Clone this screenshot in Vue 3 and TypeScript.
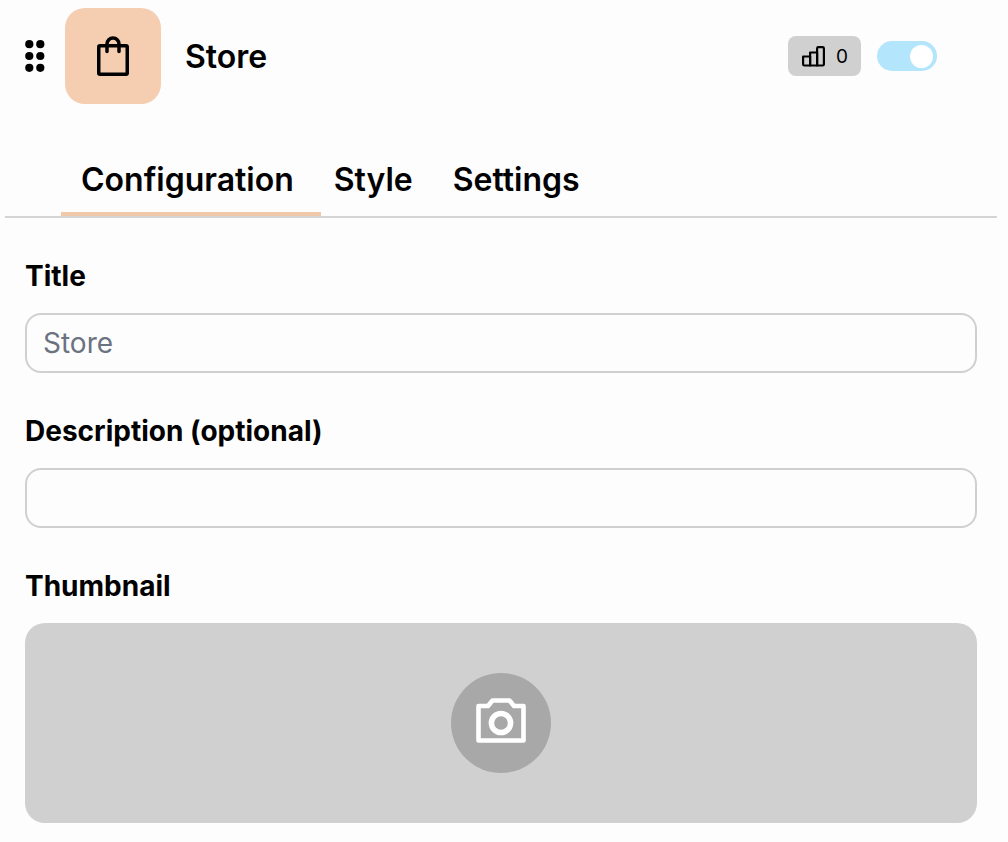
<script setup lang="ts">
const tabs: string[] = ['Configuration', 'Style', 'Settings']
</script>

<template>
  <div class="panel">
    <header class="head">
      <svg class="dots" width="20" height="32" viewBox="0 0 20 32" fill="#000">
        <circle cx="4.300" cy="4.200" r="4.100" /><circle cx="15.300" cy="4.200" r="4.100" />
        <circle cx="4.300" cy="16" r="4.100" /><circle cx="15.300" cy="16" r="4.100" />
        <circle cx="4.300" cy="27.800" r="4.100" /><circle cx="15.300" cy="27.800" r="4.100" />
      </svg>
      <div class="app-icon">
        <svg width="32" height="40" viewBox="0 0 32 40" fill="none" stroke="#000" stroke-width="3.500" stroke-linecap="round" stroke-linejoin="round">
          <path d="M3 9.750h26a1.250 1.250 0 0 1 1.250 1.250v26a1.250 1.250 0 0 1-1.250 1.250H3A1.250 1.250 0 0 1 1.750 37V11A1.250 1.250 0 0 1 3 9.750z" />
          <path d="M10 15.500V8a6 6 0 0 1 12 0v7.500" />
        </svg>
      </div>
      <div class="name">Store</div>
      <div class="stat">
        <svg width="23" height="21" viewBox="0 0 23 21" fill="none" stroke="#000" stroke-width="2.200" stroke-linejoin="round">
          <path d="M1.100 10.500h7v9H2.400a1.300 1.300 0 0 1-1.300-1.300z" />
          <path d="M8.100 6.500h7v13h-7z" />
          <path d="M15.100 2.400a1.300 1.300 0 0 1 1.300-1.300h4.200a1.300 1.300 0 0 1 1.300 1.300v15.800a1.300 1.300 0 0 1-1.300 1.300h-5.500z" />
        </svg>
        <span>0</span>
      </div>
      <div class="toggle"><span class="knob"></span></div>
    </header>

    <nav class="tabs">
      <div v-for="(t, i) in tabs" :key="t" class="tab" :class="{ active: i === 0 }">{{ t }}</div>
    </nav>

    <section class="form">
      <label class="label">Title</label>
      <input class="field" type="text" placeholder="Store" />
      <label class="label">Description (optional)</label>
      <input class="field" type="text" />
      <label class="label">Thumbnail</label>
      <div class="thumb">
        <div class="circle">
          <svg class="camera" width="50" height="45" viewBox="0 0 50 45" fill="none" stroke="#fff" stroke-width="4.600" stroke-linejoin="round">
            <path d="M2.500 8h9.500l4.500-5.500h17l4.500 5.500h9.500v34.500h-45z" />
            <circle cx="25" cy="25" r="9.600" stroke-width="5.500" />
          </svg>
        </div>
      </div>
    </section>
  </div>
</template>

<style>
html, body { margin: 0; background: #fdfdfd; }
</style>

<style scoped>
.panel {
  width: 1008px;
  height: 842px;
  overflow: hidden;
  background: #fdfdfd;
  color: #000;
  font-family: Inter, "Liberation Sans", sans-serif;
}
.head {
  display: flex;
  align-items: center;
  height: 96px;
  padding: 8px 71px 0 25px;
}
.dots { margin-right: 20px; }
.app-icon {
  width: 96px;
  height: 96px;
  border-radius: 20px;
  background: #f5cdb0;
  display: flex;
  align-items: center;
  justify-content: center;
}
.name {
  margin-left: 24px;
  font-size: 32px;
  font-weight: 600;
  flex: 1;
}
.stat {
  width: 73px;
  height: 40px;
  box-sizing: border-box;
  padding-left: 14px;
  border-radius: 8px;
  background: #d0d0d0;
  display: flex;
  align-items: center;
  gap: 11px;
  font-size: 19px;
}
.toggle {
  width: 60px;
  height: 30px;
  margin-left: 16px;
  border-radius: 15px;
  background: #b3e5fc;
  position: relative;
}
.knob {
  position: absolute;
  right: 4px;
  top: 3.500px;
  width: 23px;
  height: 23px;
  border-radius: 50%;
  background: #fff;
}
.tabs {
  display: flex;
  margin: 40px 11px 0 5px;
  padding-left: 56px;
  height: 72px;
  border-bottom: 2px solid #d4d4d4;
}
.tab {
  position: relative;
  padding: 0 20px;
  line-height: 72px;
  font-size: 32px;
  font-weight: 600;
}
.tab.active::after {
  content: "";
  position: absolute;
  left: 0;
  bottom: 0;
  width: 260px;
  height: 4px;
  background: #f0c8aa;
}
.form {
  padding: 40px 31px 0 25px;
  display: flex;
  flex-direction: column;
}
.label {
  font-size: 28px;
  line-height: 36px;
  font-weight: 700;
  margin-bottom: 19px;
}
.field {
  display: block;
  height: 60px;
  box-sizing: border-box;
  border: 2px solid #d0d0d0;
  border-radius: 16px;
  background: transparent;
  padding: 0 16px;
  font: 400 28px Inter, "Liberation Sans", sans-serif;
  margin-bottom: 40px;
  outline: none;
}
.field::placeholder { color: #6b7280; opacity: 1; }
.thumb {
  height: 200px;
  border-radius: 20px;
  background: #d0d0d0;
  display: flex;
  align-items: center;
  justify-content: center;
}
.circle {
  width: 100px;
  height: 100px;
  border-radius: 50%;
  background: #a8a8a8;
  display: flex;
  align-items: center;
  justify-content: center;
}
.camera { margin-bottom: 5px; }
</style>
